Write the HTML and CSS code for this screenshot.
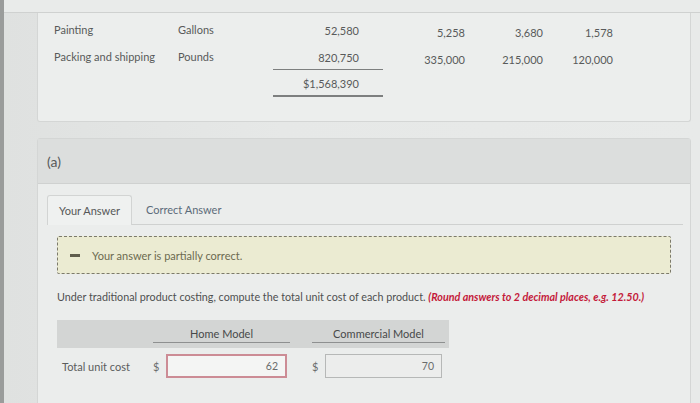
FILE: index.html
```html
<!DOCTYPE html>
<html>
<head>
<meta charset="utf-8">
<link rel="stylesheet" href="styles.css">
</head>
<body>
<div class="page">
  <div class="topstrip"></div>
  <div class="card data-card">
    <div class="data-grid">
      <div class="c-label">Painting</div>
      <div class="c-unit">Gallons</div>
      <div class="c-num c-n1">52,580</div>
      <div class="c-num c-n2">5,258</div>
      <div class="c-num c-n3">3,680</div>
      <div class="c-num c-n4">1,578</div>

      <div class="c-label">Packing and shipping</div>
      <div class="c-unit">Pounds</div>
      <div class="c-num c-n1 rule-single">820,750</div>
      <div class="c-num c-n2">335,000</div>
      <div class="c-num c-n3">215,000</div>
      <div class="c-num c-n4">120,000</div>

      <div class="c-label"></div>
      <div class="c-unit"></div>
      <div class="c-num c-n1 rule-double">$1,568,390</div>
      <div class="c-num c-n2"></div>
      <div class="c-num c-n3"></div>
      <div class="c-num c-n4"></div>
    </div>
  </div>

  <div class="card section">
    <div class="section-head">(a)</div>
    <div class="section-body">
      <div class="tabs">
        <div class="tab tab-active">Your Answer</div>
        <div class="tab tab-link">Correct Answer</div>
      </div>
      <div class="notice">
        <span class="notice-icon"></span>
        <span class="notice-text">Your answer is partially correct.</span>
      </div>
      <p class="prompt">Under traditional product costing, compute the total unit cost of each product. <em class="hint">(Round answers to 2 decimal places, e.g. 12.50.)</em></p>
      <div class="answer">
        <div class="answer-head">
          <div class="ah-blank"></div>
          <div class="ah-col"><span>Home Model</span></div>
          <div class="ah-gap"></div>
          <div class="ah-col"><span>Commercial Model</span></div>
        </div>
        <div class="answer-row">
          <div class="ar-label">Total unit cost</div>
          <div class="ar-cell">
            <span class="dollar">$</span>
            <div class="field field-wrong">62</div>
          </div>
          <div class="ah-gap"></div>
          <div class="ar-cell">
            <span class="dollar">$</span>
            <div class="field field-ok">70</div>
          </div>
        </div>
      </div>
    </div>
  </div>
</div>
</body>
</html>
```

FILE: styles.css
```css
* { box-sizing: border-box; }
html, body {
  margin: 0;
  padding: 0;
  height: 100%;
  overflow: hidden;
}
body {
  font-family: Lato, "Open Sans", Arial, sans-serif;
  background: #e2e4e3;
  color: #555757;
}
.page {
  height: 403px;
  border-left: 4px solid #9a9c9b;
  background: linear-gradient(90deg, #dfe1e0 0%, #e6e8e7 40%, #e8eae9 100%);
}
.topstrip {
  height: 13px;
  border-bottom: 1px solid #cfd1d0;
  background: #e9ebea;
}
.card {
  margin-left: 33px;
  width: 654px;
  background: #eceeed;
  border: 1px solid #d4d6d5;
}
.data-card {
  border-top: none;
  height: 109px;
  padding-top: 3px;
  padding-left: 16px;
  border-radius: 0 0 3px 3px;
}
.data-grid {
  display: grid;
  grid-template-columns: 124px 95px 110px 82px 78px 70px;
  grid-auto-rows: 27px;
  font-size: 11px;
  color: #585a5a;
}
.data-grid > div {
  display: flex;
  align-items: center;
}
.c-num {
  justify-content: flex-end;
}
.c-n1 { padding-right: 24px; padding-top: 2px; }
.c-n2, .c-n3, .c-n4 { padding-top: 5px; }
.rule-single { border-bottom: 1px solid #7d7f7f; }
.rule-double { border-bottom: 2px solid #7d7f7f; }

.section {
  margin-top: 16px;
  height: 280px;
  border-radius: 3px 3px 0 0;
  background: #ebedec;
}
.section-head {
  height: 45px;
  background: #dcdedd;
  border-bottom: 1px solid #cfd1d0;
  padding-left: 9px;
  display: flex;
  align-items: center;
  font-size: 14px;
  color: #575959;
}
.section-body {
  padding: 11px 7px 0 9px;
}
.tabs {
  display: flex;
  height: 30px;
  border-bottom: 1px solid #cfd1d0;
  font-size: 11px;
}
.tab {
  display: flex;
  align-items: center;
  padding: 0 10px 0 11px;
}
.tab-active {
  width: 85px;
  background: #eff1f0;
  border: 1px solid #d2d4d3;
  border-bottom: none;
  border-radius: 3px 3px 0 0;
  color: #555757;
  margin-bottom: -1px;
}
.tab-link {
  padding-left: 14px;
  color: #5b6b79;
}
.notice {
  margin: 11px 12px 0 10px;
  height: 38px;
  background: #ebebd2;
  border: 1px dashed #7c7a6b;
  border-radius: 2px;
  display: flex;
  align-items: center;
  padding-left: 12px;
}
.notice-icon {
  width: 10px;
  height: 3px;
  background: #5f5d4d;
  margin-right: 12px;
}
.notice-text {
  font-size: 11px;
  color: #6c6a50;
}
.prompt {
  margin: 15px 0 0 10px;
  font-size: 10.75px;
  color: #4e5050;
  line-height: 16px;
}
.hint {
  color: #c41a3a;
  font-weight: bold;
  font-style: italic;
}
.answer {
  margin: 15px 0 0 10px;
  width: 392px;
}
.answer-head {
  display: grid;
  grid-template-columns: 96px 137px 22px 133px;
  height: 28px;
  background: #d3d5d4;
  font-size: 11px;
  color: #474949;
}
.ah-col {
  display: flex;
  align-items: flex-end;
  padding-bottom: 5px;
}
.ah-col span {
  display: block;
  width: 100%;
  text-align: center;
  border-bottom: 1.5px solid #8e9090;
  padding-bottom: 2px;
}
.answer-row {
  display: grid;
  grid-template-columns: 96px 137px 22px 133px;
  margin-top: 6px;
  height: 24px;
  align-items: center;
  font-size: 11px;
}
.ar-label {
  padding-left: 5px;
  color: #5a5c5c;
}
.ar-cell {
  display: flex;
  align-items: center;
}
.dollar {
  width: 13px;
  color: #6a6c6c;
  font-size: 11px;
}
.field {
  height: 24px;
  display: flex;
  align-items: center;
  justify-content: flex-end;
  padding-right: 7px;
  font-size: 10.5px;
  color: #6a6c6c;
}
.field-wrong {
  width: 121px;
  border: 2px solid #cc8c95;
  background: #f4f5f4;
}
.field-ok {
  width: 117px;
  border: 1px solid #b6b8b7;
  background: #ecedec;
}
```
